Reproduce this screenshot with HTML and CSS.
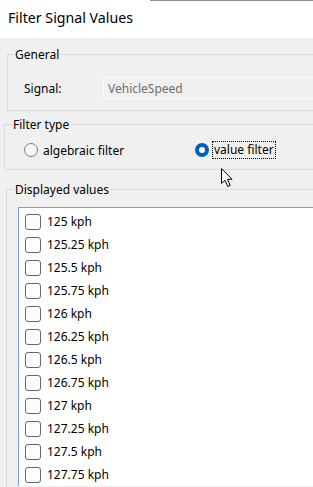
FILE: index.html
```html
<!DOCTYPE html>
<html lang="en">
<head>
    <meta charset="UTF-8">
    <meta name="viewport" content="width=device-width, initial-scale=1.0">
    <title>Filter Signal Values</title>
    <link rel="stylesheet" href="styles.css">
</head>
<body>
    <div class="titlebar">Filter Signal Values</div>

    <div class="dialog">
        <fieldset class="group group-general">
            <legend>General</legend>
            <div class="field-row">
                <label for="signal">Signal:</label>
                <input type="text" id="signal" value="VehicleSpeed" disabled>
            </div>
        </fieldset>

        <fieldset class="group group-type">
            <legend>Filter type</legend>
            <div class="radio-row">
                <label class="radio radio-first"><span class="radio-mark"></span>algebraic filter</label>
                <label class="radio checked"><span class="radio-mark"></span><span class="focus">value filter</span></label>
            </div>
        </fieldset>

        <fieldset class="group group-values">
            <legend>Displayed values</legend>
            <div class="listbox">
                <div class="item"><span class="check"></span>125 kph</div>
                <div class="item"><span class="check"></span>125.25 kph</div>
                <div class="item"><span class="check"></span>125.5 kph</div>
                <div class="item"><span class="check"></span>125.75 kph</div>
                <div class="item"><span class="check"></span>126 kph</div>
                <div class="item"><span class="check"></span>126.25 kph</div>
                <div class="item"><span class="check"></span>126.5 kph</div>
                <div class="item"><span class="check"></span>126.75 kph</div>
                <div class="item"><span class="check"></span>127 kph</div>
                <div class="item"><span class="check"></span>127.25 kph</div>
                <div class="item"><span class="check"></span>127.5 kph</div>
                <div class="item"><span class="check"></span>127.75 kph</div>
            </div>
        </fieldset>

        <!-- mouse pointer over the radio buttons -->
        <svg class="cursor" width="14" height="21" viewBox="0 0 14 21">
            <path d="M1.5 1.5 L1.5 16.5 L5 13.2 L7.8 19.5 L10.2 18.5 L7.5 12.3 L12 12.3 Z" fill="#fff" stroke="#000" stroke-width="1" stroke-linejoin="miter"/>
        </svg>
    </div>
</body>
</html>
```

FILE: styles.css
```css
body {
    margin: 0;
    width: 313px;
    height: 487px;
    overflow: hidden;
    font-family: "Noto Sans", "Open Sans", sans-serif;
    font-size: 12px;
    color: #000;
    background-color: #f0f0f0;
}
.titlebar {
    height: 38px;
    box-sizing: border-box;
    padding: 8px 0 0 8px;
    background-color: #fff;
    background-image: linear-gradient(to right, transparent 150px, #8c9096 150px);
    background-size: 100% 1px;
    background-repeat: no-repeat;
    font-size: 14.2px;
    line-height: 20px;
}
.dialog {
    position: relative;
    padding-top: 9px;
    height: 440px;
    overflow: hidden;
}
.group {
    margin: 0 -30px 0 6px;
    padding: 0;
    border: 1px solid #dcdcdc;
    min-width: 0;
}
.group legend {
    padding: 0 2px;
    margin-left: 6px;
    line-height: 15px;
}
.group-general {
    margin-left: 7px;
}
.group-general legend {
    margin-left: 5px;
}
.field-row {
    display: flex;
    align-items: center;
    margin: 15px 0 11px 16px;
}
.field-row label {
    width: 79px;
}
.field-row input {
    flex: 1;
    height: 22px;
    box-sizing: border-box;
    padding: 0 4px;
    border: 1px solid #fafafa;
    background: #f0f0f0;
    font: inherit;
    color: #6d6d6d;
}
.group-type {
    margin-top: 6px;
    margin-left: 4px;
}
.radio-row {
    display: flex;
    align-items: center;
    height: 16px;
    margin: 10px 0 11px 19px;
}
.radio {
    display: flex;
    align-items: center;
    gap: 5px;
}
.radio-first {
    width: 171px;
}
.radio-mark {
    width: 14px;
    height: 14px;
    box-sizing: border-box;
    border: 1px solid #7b7b7b;
    border-radius: 50%;
    background: #f7f7f7;
}
.radio.checked .radio-mark {
    border: 4px solid #005fb8;
    background: #fff;
}
.radio.checked {
    gap: 3px;
}
.focus {
    border: 1px dotted #000;
    padding: 0 1px;
    line-height: 16px;
}
.group-values {
    margin-top: 12px;
    height: 320px;
}
.group-values legend {
    margin-left: 6px;
}
.listbox {
    margin: 10px 0 0 11px;
    border: 1px solid #7a9fcc;
    border-bottom: none;
    background: #fff;
    padding-top: 2px;
}
.item {
    display: flex;
    align-items: center;
    height: 23px;
    padding-left: 6px;
    gap: 6px;
}
.check {
    width: 16px;
    height: 16px;
    box-sizing: border-box;
    border: 1px solid #5e6b74;
    border-radius: 3px;
    background: #fdfdfd;
}
.cursor {
    position: absolute;
    left: 220px;
    top: 129px;
}
```
